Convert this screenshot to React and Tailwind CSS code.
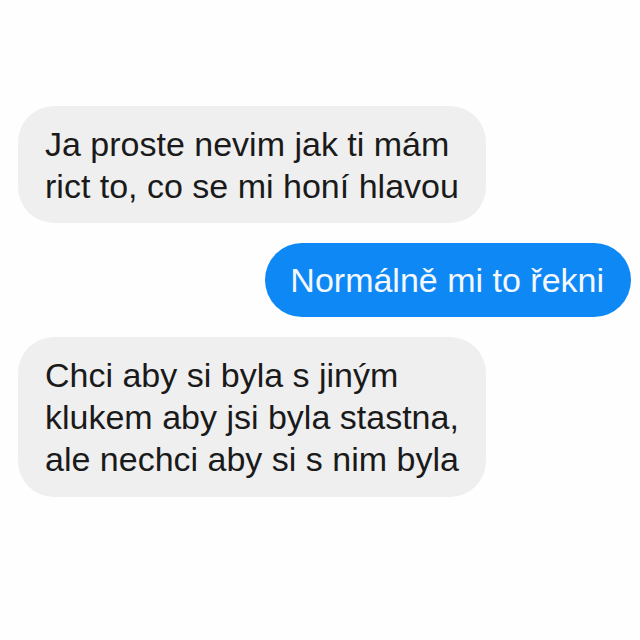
export default function App() {
  const font = { fontFamily: '"Liberation Sans", Arial, sans-serif' };
  return (
    <div
      className="w-[640px] h-[640px] bg-[#fefefe] flex flex-col pt-[106px] gap-[20px] overflow-hidden"
      style={font}
    >
      <div className="flex justify-start pl-[18px]">
        <div className="bg-[#efeff0] text-[#1a1a1a] rounded-[36px] px-[27px] pt-[17px] pb-[16px] text-[34px] leading-[42px] whitespace-nowrap">
          Ja proste nevim jak ti mám
          <br />
          rict to, co se mi honí hlavou
        </div>
      </div>
      <div className="flex justify-end pr-[9px]">
        <div className="bg-[#0e88f5] text-[#f4f8ff] rounded-full pl-[25px] pr-[27px] pt-[16px] pb-[16px] text-[34px] leading-[42px] whitespace-nowrap">
          Normálně mi to řekni
        </div>
      </div>
      <div className="flex justify-start pl-[18px]">
        <div className="bg-[#efeff0] text-[#1a1a1a] rounded-[36px] px-[27px] pt-[17px] pb-[17px] text-[34px] leading-[42px] whitespace-nowrap">
          Chci aby si byla s jiným
          <br />
          klukem aby jsi byla stastna,
          <br />
          ale nechci aby si s nim byla
        </div>
      </div>
    </div>
  );
}
